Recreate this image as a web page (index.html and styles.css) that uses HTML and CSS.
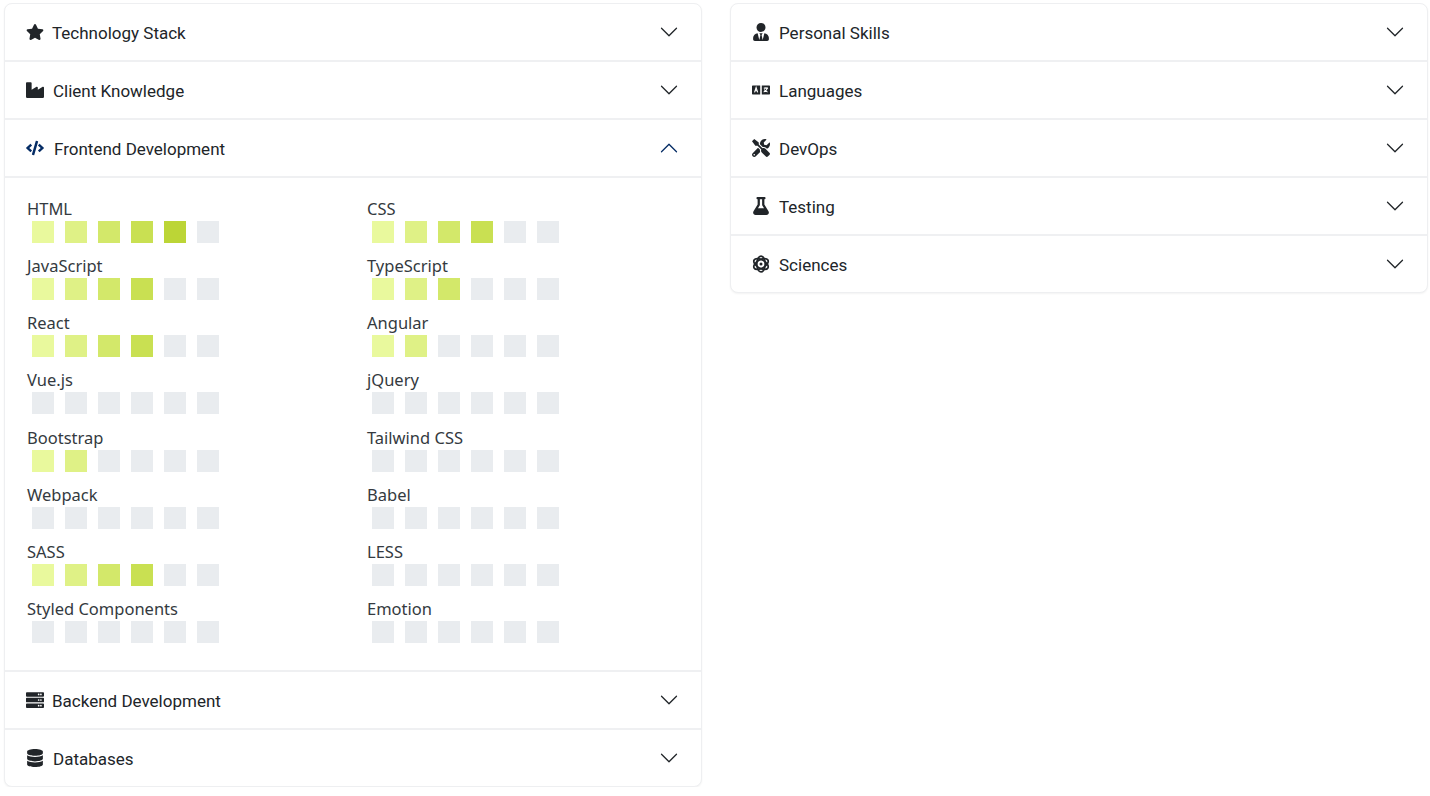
FILE: index.html
```html
<!DOCTYPE html>
<html lang="en">
<head>
    <meta charset="UTF-8">
    <meta name="viewport" content="width=device-width, initial-scale=1.0">
    <title>Skills</title>
    <link rel="stylesheet" href="styles.css">
</head>
<body>
    <svg class="defs" aria-hidden="true">
        <symbol id="chevron" viewBox="0 0 16 16"><path fill-rule="evenodd" d="M1.646 4.646a.5.5 0 0 1 .708 0L8 10.293l5.646-5.647a.5.5 0 0 1 .708.708l-6 6a.5.5 0 0 1-.708 0l-6-6a.5.5 0 0 1 0-.708z"/></symbol>
    </svg>

    <div class="columns">
        <div class="accordion">
            <div class="accordion-item">
                <div class="accordion-header">
                    <span class="title">
                        <svg class="icon icon-star" viewBox="0 0 576 512"><path d="M259.3 17.8L194 150.2 47.9 171.5c-26.2 3.8-36.7 36.1-17.7 54.6l105.7 103-25 145.5c-4.5 26.3 23.2 46 46.4 33.7L288 439.6l130.7 68.7c23.2 12.2 50.9-7.4 46.4-33.7l-25-145.5 105.7-103c19-18.5 8.5-50.8-17.7-54.6L382 150.2 316.7 17.8c-11.7-23.6-45.6-23.9-57.4 0z"/></svg>
                        Technology Stack
                    </span>
                    <svg class="chevron"><use href="#chevron"/></svg>
                </div>
            </div>
            <div class="accordion-item">
                <div class="accordion-header">
                    <span class="title">
                        <svg class="icon icon-industry" viewBox="0 0 512 512"><path d="M475.115 163.781L336 252.309v-68.28c0-18.916-20.931-30.399-36.885-20.248L160 252.309V56c0-13.255-10.745-24-24-24H24C10.745 32 0 42.745 0 56v400c0 13.255 10.745 24 24 24h464c13.255 0 24-10.745 24-24V184.029c0-18.917-20.931-30.399-36.885-20.248z"/></svg>
                        Client Knowledge
                    </span>
                    <svg class="chevron"><use href="#chevron"/></svg>
                </div>
            </div>
            <div class="accordion-item">
                <div class="accordion-header open">
                    <span class="title">
                        <svg class="icon icon-code" viewBox="0 0 640 512"><path d="M278.9 511.5l-61-17.7c-6.4-1.8-10-8.5-8.2-14.9L346.2 8.7c1.8-6.4 8.5-10 14.9-8.2l61 17.7c6.4 1.8 10 8.5 8.2 14.9L293.8 503.3c-1.9 6.4-8.5 10.1-14.9 8.2zm-114-112.2l43.5-46.4c4.6-4.9 4.3-12.7-.8-17.2L117 256l90.6-79.7c5.1-4.5 5.5-12.3.8-17.2l-43.5-46.4c-4.5-4.8-12.1-5.1-17-.5L3.8 247.2c-5.1 4.7-5.1 12.8 0 17.5l144.1 135.1c4.9 4.6 12.5 4.4 17-.5zm327.2.6l144.1-135.1c5.1-4.7 5.1-12.8 0-17.5L492.1 112.1c-4.8-4.5-12.4-4.3-17 .5L431.6 159c-4.6 4.9-4.3 12.7.8 17.2L523 256l-90.6 79.7c-5.1 4.5-5.5 12.3-.8 17.2l43.5 46.4c4.5 4.9 12.1 5.1 17 .6z"/></svg>
                        Frontend Development
                    </span>
                    <svg class="chevron"><use href="#chevron"/></svg>
                </div>
                <div class="accordion-body">
                    <div class="skill"><div class="skill-name">HTML</div><div class="levels"><i class="l1"></i><i class="l2"></i><i class="l3"></i><i class="l4"></i><i class="l5"></i><i></i></div></div>
                    <div class="skill"><div class="skill-name">CSS</div><div class="levels"><i class="l1"></i><i class="l2"></i><i class="l3"></i><i class="l4"></i><i></i><i></i></div></div>
                    <div class="skill"><div class="skill-name">JavaScript</div><div class="levels"><i class="l1"></i><i class="l2"></i><i class="l3"></i><i class="l4"></i><i></i><i></i></div></div>
                    <div class="skill"><div class="skill-name">TypeScript</div><div class="levels"><i class="l1"></i><i class="l2"></i><i class="l3"></i><i></i><i></i><i></i></div></div>
                    <div class="skill"><div class="skill-name">React</div><div class="levels"><i class="l1"></i><i class="l2"></i><i class="l3"></i><i class="l4"></i><i></i><i></i></div></div>
                    <div class="skill"><div class="skill-name">Angular</div><div class="levels"><i class="l1"></i><i class="l2"></i><i></i><i></i><i></i><i></i></div></div>
                    <div class="skill"><div class="skill-name">Vue.js</div><div class="levels"><i></i><i></i><i></i><i></i><i></i><i></i></div></div>
                    <div class="skill"><div class="skill-name">jQuery</div><div class="levels"><i></i><i></i><i></i><i></i><i></i><i></i></div></div>
                    <div class="skill"><div class="skill-name">Bootstrap</div><div class="levels"><i class="l1"></i><i class="l2"></i><i></i><i></i><i></i><i></i></div></div>
                    <div class="skill"><div class="skill-name">Tailwind CSS</div><div class="levels"><i></i><i></i><i></i><i></i><i></i><i></i></div></div>
                    <div class="skill"><div class="skill-name">Webpack</div><div class="levels"><i></i><i></i><i></i><i></i><i></i><i></i></div></div>
                    <div class="skill"><div class="skill-name">Babel</div><div class="levels"><i></i><i></i><i></i><i></i><i></i><i></i></div></div>
                    <div class="skill"><div class="skill-name">SASS</div><div class="levels"><i class="l1"></i><i class="l2"></i><i class="l3"></i><i class="l4"></i><i></i><i></i></div></div>
                    <div class="skill"><div class="skill-name">LESS</div><div class="levels"><i></i><i></i><i></i><i></i><i></i><i></i></div></div>
                    <div class="skill"><div class="skill-name">Styled Components</div><div class="levels"><i></i><i></i><i></i><i></i><i></i><i></i></div></div>
                    <div class="skill"><div class="skill-name">Emotion</div><div class="levels"><i></i><i></i><i></i><i></i><i></i><i></i></div></div>
                </div>
            </div>
            <div class="accordion-item">
                <div class="accordion-header">
                    <span class="title">
                        <svg class="icon icon-server" viewBox="0 0 512 512"><path fill-rule="evenodd" d="M24 32h464a24 24 0 0 1 24 24v80a24 24 0 0 1-24 24H24a24 24 0 0 1-24-24V56a24 24 0 0 1 24-24zm376 64a24 24 0 1 0 48 0 24 24 0 1 0-48 0zm-64 0a24 24 0 1 0 48 0 24 24 0 1 0-48 0zM24 192h464a24 24 0 0 1 24 24v80a24 24 0 0 1-24 24H24a24 24 0 0 1-24-24v-80a24 24 0 0 1 24-24zm376 64a24 24 0 1 0 48 0 24 24 0 1 0-48 0zm-64 0a24 24 0 1 0 48 0 24 24 0 1 0-48 0zM24 352h464a24 24 0 0 1 24 24v80a24 24 0 0 1-24 24H24a24 24 0 0 1-24-24v-80a24 24 0 0 1 24-24zm376 64a24 24 0 1 0 48 0 24 24 0 1 0-48 0zm-64 0a24 24 0 1 0 48 0 24 24 0 1 0-48 0z"/></svg>
                        Backend Development
                    </span>
                    <svg class="chevron"><use href="#chevron"/></svg>
                </div>
            </div>
            <div class="accordion-item">
                <div class="accordion-header">
                    <span class="title">
                        <svg class="icon icon-database" viewBox="0 0 448 512"><path d="M448 73.143v45.714C448 159.143 347.667 192 224 192S0 159.143 0 118.857V73.143C0 32.857 100.333 0 224 0s224 32.857 224 73.143zM448 176v102.857C448 319.143 347.667 352 224 352S0 319.143 0 278.857V176c48.125 33.143 136.208 48.572 224 48.572S399.874 209.143 448 176zm0 160v102.857C448 479.143 347.667 512 224 512S0 479.143 0 438.857V336c48.125 33.143 136.208 48.572 224 48.572S399.874 369.143 448 336z"/></svg>
                        Databases
                    </span>
                    <svg class="chevron"><use href="#chevron"/></svg>
                </div>
            </div>
        </div>

        <div class="accordion">
            <div class="accordion-item">
                <div class="accordion-header">
                    <span class="title">
                        <svg class="icon icon-user" viewBox="0 0 448 512"><path d="M224 256c70.7 0 128-57.3 128-128S294.7 0 224 0 96 57.3 96 128s57.3 128 128 128zm95.8 32.6L272 480l-32-136 32-56h-96l32 56-32 136-47.8-191.4C56.9 292 0 350.3 0 422.4V464c0 26.5 21.5 48 48 48h352c26.5 0 48-21.5 48-48v-41.6c0-72.1-56.9-130.4-128.2-133.8z"/></svg>
                        Personal Skills
                    </span>
                    <svg class="chevron"><use href="#chevron"/></svg>
                </div>
            </div>
            <div class="accordion-item">
                <div class="accordion-header">
                    <span class="title">
                        <svg class="icon icon-language" viewBox="0 0 640 512"><path d="M24 96h268v320H24a24 24 0 0 1-24-24V120a24 24 0 0 1 24-24zM348 96h268a24 24 0 0 1 24 24v272a24 24 0 0 1-24 24H348z"/><path d="M90 340l56-170 56 170M112 285h68M420 190h150M495 160v30M545 190c-20 70-70 120-130 140M435 240c30 50 70 80 120 90" fill="none" stroke="#fff" stroke-width="38"/></svg>
                        Languages
                    </span>
                    <svg class="chevron"><use href="#chevron"/></svg>
                </div>
            </div>
            <div class="accordion-item">
                <div class="accordion-header">
                    <span class="title">
                        <svg class="icon icon-tools" viewBox="0 0 512 512"><path d="M501.1 395.7L384 278.6c-23.1-23.1-57.6-27.6-85.4-13.9L192 158.1V96L64 0 0 64l96 128h62.1l106.6 106.6c-13.6 27.8-9.2 62.3 13.9 85.4l117.1 117.1c14.6 14.6 38.2 14.6 52.7 0l52.7-52.7c14.5-14.6 14.5-38.2 0-52.7zM331.7 225c28.3 0 54.9 11 74.9 31l19.4 19.4c15.8-6.9 30.8-16.5 43.8-29.5 37.1-37.1 49.7-89.3 37.9-136.7-2.2-9-13.5-12.1-20.1-5.5l-74.4 74.4-67.9-11.3L334 98.9l74.4-74.4c6.6-6.6 3.4-17.9-5.7-20.2-47.4-11.7-99.6.9-136.6 37.9-28.5 28.5-41.9 66.1-41.2 103.6l82.1 82.1c8.1-1.9 16.5-2.9 24.7-2.9zm-103.9 82l-56.7-56.7L18.7 402.8c-25 25-25 65.5 0 90.5s65.5 25 90.5 0l123.6-123.6c-7.6-19.9-9.9-41.6-5-62.7zM64 472c-13.2 0-24-10.8-24-24 0-13.3 10.7-24 24-24s24 10.7 24 24c0 13.2-10.7 24-24 24z"/></svg>
                        DevOps
                    </span>
                    <svg class="chevron"><use href="#chevron"/></svg>
                </div>
            </div>
            <div class="accordion-item">
                <div class="accordion-header">
                    <span class="title">
                        <svg class="icon icon-flask" viewBox="0 0 448 512"><path d="M437.2 403.5L320 215V64h8c13.3 0 24-10.7 24-24V24c0-13.3-10.7-24-24-24H120c-13.3 0-24 10.7-24 24v16c0 13.3 10.7 24 24 24h8v151L10.8 403.5C-18.5 450.6 15.3 512 70.9 512h306.2c55.7 0 89.4-61.5 60.1-108.5zM137.9 320l48.2-77.6c3.7-5.2 5.8-11.6 5.8-18.4V64h64v160c0 6.9 2.2 13.2 5.8 18.4l48.2 77.6h-172z"/></svg>
                        Testing
                    </span>
                    <svg class="chevron"><use href="#chevron"/></svg>
                </div>
            </div>
            <div class="accordion-item">
                <div class="accordion-header">
                    <span class="title">
                        <svg class="icon icon-atom" viewBox="0 0 24 24"><g fill="none" stroke="#212529" stroke-width="2.3"><ellipse cx="12" cy="12" rx="10.6" ry="5.6" transform="rotate(90 12 12)"/><ellipse cx="12" cy="12" rx="10.6" ry="5.6" transform="rotate(30 12 12)"/><ellipse cx="12" cy="12" rx="10.6" ry="5.6" transform="rotate(150 12 12)"/></g><circle cx="12" cy="12" r="2"/></svg>
                        Sciences
                    </span>
                    <svg class="chevron"><use href="#chevron"/></svg>
                </div>
            </div>
        </div>
    </div>
</body>
</html>
```

FILE: styles.css
```css
body {
    font-family: 'Roboto', 'Liberation Sans', sans-serif;
    font-size: 17px;
    color: #212529;
    background-color: white;
    margin: 0;
    padding: 3px 2px 0 4px;
}

.defs {
    display: none;
}

.columns {
    display: grid;
    grid-template-columns: 698px 698px;
    column-gap: 28px;
    align-items: start;
}

.accordion {
    border: 1px solid #eeeff1;
    border-radius: 8px;
    box-shadow: 0 1px 2px rgba(0, 0, 0, 0.05);
    background-color: white;
}

.accordion-item + .accordion-item {
    border-top: 2px solid #eff0f2;
}

.accordion-header {
    height: 56px;
    padding: 0 22px 0 21px;
    display: flex;
    align-items: center;
    justify-content: space-between;
}

.accordion-header.open {
    border-bottom: 2px solid #eff0f2;
}

.title {
    display: flex;
    align-items: center;
    padding-top: 2px;
}

.icon {
    height: 18px;
    width: 18px;
    margin: -2px 9px 0 0;
    fill: #212529;
}

.icon-star, .icon-server {
    margin-right: 8px;
}

.icon-code {
    margin-right: 10px;
    fill: #052c65;
}

.chevron {
    width: 20px;
    height: 20px;
    fill: #212529;
}

.open .chevron {
    fill: #052c65;
    transform: rotate(180deg);
}

.accordion-body {
    display: grid;
    grid-template-columns: 340px 340px;
    padding: 20px 22px 27px;
    row-gap: 12.14px;
}

.skill-name {
    font-family: 'Noto Sans', sans-serif;
    font-size: 16.5px;
    line-height: 21px;
    color: #343a40;
}

.levels {
    display: flex;
    gap: 11px;
    padding-left: 5px;
    margin-top: 2px;
}

.levels i {
    width: 22px;
    height: 22px;
    background-color: #e9ecef;
}

.levels .l1 {
    background-color: #e9f99d;
}

.levels .l2 {
    background-color: #dff186;
}

.levels .l3 {
    background-color: #d3e86a;
}

.levels .l4 {
    background-color: #c9e052;
}

.levels .l5 {
    background-color: #bcd536;
}
```
